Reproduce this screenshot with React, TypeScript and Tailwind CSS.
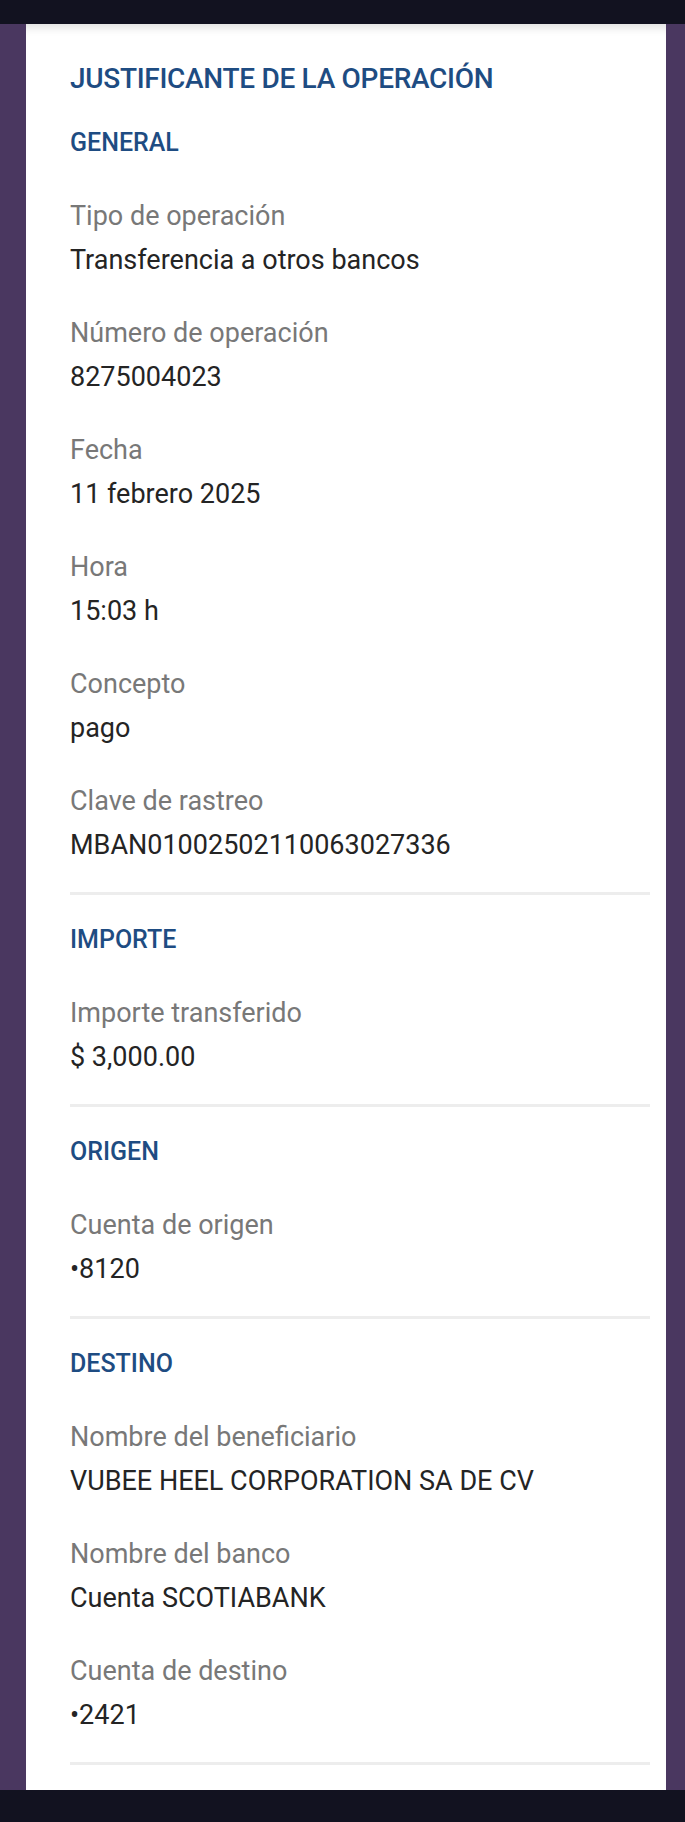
const sections: { title: string; fields: [string, string][] }[] = [
  {
    title: "GENERAL",
    fields: [
      ["Tipo de operación", "Transferencia a otros bancos"],
      ["Número de operación", "8275004023"],
      ["Fecha", "11 febrero 2025"],
      ["Hora", "15:03 h"],
      ["Concepto", "pago"],
      ["Clave de rastreo", "MBAN01002502110063027336"],
    ],
  },
  {
    title: "IMPORTE",
    fields: [["Importe transferido", "$ 3,000.00"]],
  },
  {
    title: "ORIGEN",
    fields: [["Cuenta de origen", "•8120"]],
  },
  {
    title: "DESTINO",
    fields: [
      ["Nombre del beneficiario", "VUBEE HEEL CORPORATION SA DE CV"],
      ["Nombre del banco", "Cuenta SCOTIABANK"],
      ["Cuenta de destino", "•2421"],
    ],
  },
];

function Field({ label, value }: { label: string; value: string }) {
  return (
    <div className="flex flex-col">
      <span className="text-[27px] leading-[44px] text-[#787878]">{label}</span>
      <span className="text-[27px] leading-[44px] text-[#242424]">{value}</span>
    </div>
  );
}

export default function App() {
  return (
    <div
      className="flex h-[1822px] w-[685px] flex-col bg-[#4a3760]"
      style={{ fontFamily: "Roboto, 'Noto Sans', sans-serif" }}
    >
      <div className="h-[24px] bg-[#121220]" />
      <div className="ml-[26px] mr-[19px] flex h-[1766px] flex-col bg-white pb-[29px] pl-[44px] pr-[16px] pt-[33px] shadow-[inset_0_10px_8px_-6px_rgba(0,0,0,0.12)]">
        <h1 className="text-[28px] font-medium leading-[44px] tracking-[-0.3px] text-[#1e4c82]">
          JUSTIFICANTE DE LA OPERACIÓN
        </h1>
        <div className="mt-[20px] flex flex-col">
          {sections.map((s, i) => (
            <div key={s.title} className="flex flex-col">
              {i > 0 && <div className="h-[3px] bg-[#ededed]" />}
              <div className={`flex flex-col gap-[29px] ${i > 0 ? "pt-[23px]" : ""} pb-[25px]`}>
                <h2 className="text-[25px] font-medium leading-[44px] text-[#1e4c82]">
                  {s.title}
                </h2>
                {s.fields.map(([l, v]) => (
                  <Field key={l} label={l} value={v} />
                ))}
              </div>
            </div>
          ))}
          <div className="h-[3px] bg-[#ededed]" />
        </div>
      </div>
      <div className="flex-1 bg-[#121220]" />
    </div>
  );
}
